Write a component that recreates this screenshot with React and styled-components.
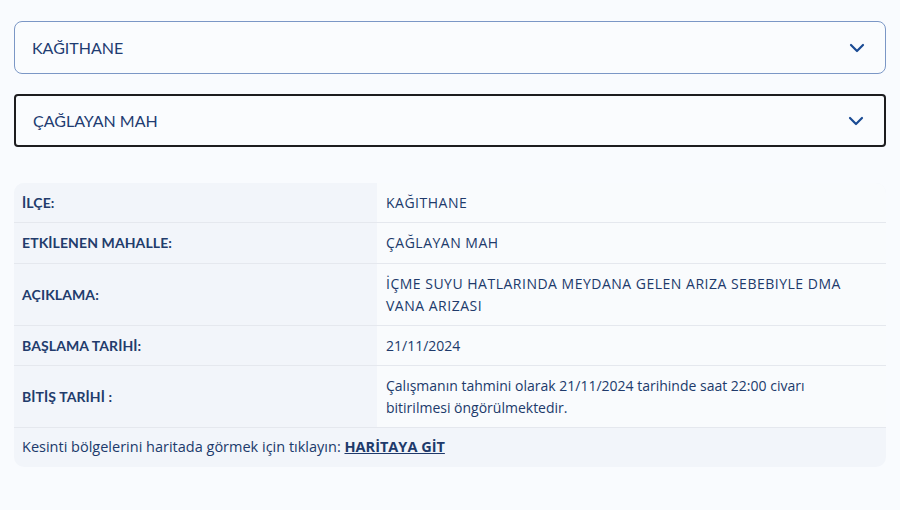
import styled, { createGlobalStyle } from 'styled-components';

const GlobalStyle = createGlobalStyle`
    body {
        margin: 0;
        background: #f9fbfe;
        font-family: "Lato", "Noto Sans", sans-serif;
        color: #203a6b;
    }
`;

const Page = styled.div`
    padding: 21px 14px;
    display: flex;
    flex-direction: column;
`;

const Select = styled.div`
    height: 53px;
    box-sizing: border-box;
    display: flex;
    align-items: center;
    justify-content: space-between;
    padding: 0 20px 0 17px;
    border: ${p => p.$active ? '2px solid #1d1d1f' : '1.5px solid #7b97c6'};
    border-radius: ${p => p.$active ? '4px' : '8px'};
    background: #fafcfe;
    font-size: 16px;
    color: #1f3c72;
    margin-bottom: ${p => p.$active ? '36px' : '20px'};
`;

const Chevron = () => (
    <svg width="16" height="10" viewBox="0 0 16 10" fill="none" stroke="#1a4b94" strokeWidth="2.2" strokeLinecap="round" strokeLinejoin="round">
        <path d="M2 2l6 6 6-6" />
    </svg>
);

const Table = styled.div`
    display: grid;
    grid-template-columns: 363px 1fr;
    border-radius: 10px;
    overflow: hidden;
    background: #f2f5fa;
    font-family: "Open Sans", "Noto Sans", sans-serif;
    font-size: 14px;
    line-height: 22px;
`;

const Cell = styled.div`
    padding: 9px 8px 8.25px;
    border-bottom: 1px solid #e5e8ee;
    display: flex;
    align-items: center;
    background: ${p => p.$value ? '#f9fbfd' : '#f2f5fa'};
    padding-left: ${p => p.$value ? '9px' : '8px'};
`;

const Label = styled.span`
    font-family: "Lato", sans-serif;
    font-size: 14px;
    font-weight: 700;
    letter-spacing: 0.1px;
    color: #223c6c;
`;

const Value = styled.span`
    max-width: 470px;
    letter-spacing: ${p => p.$caps ? '0.5px' : '0'};
`;

const Footer = styled.div`
    grid-column: 1 / -1;
    padding: 8px 8px 9px;
    font-size: 14.5px;
`;

const MapLink = styled.a`
    font-weight: 700;
    color: #203a6b;
    text-decoration: underline;
`;

const rows = [
    ['İLÇE:', 'KAĞITHANE'],
    ['ETKİLENEN MAHALLE:', 'ÇAĞLAYAN MAH'],
    ['AÇIKLAMA:', 'İÇME SUYU HATLARINDA MEYDANA GELEN ARIZA SEBEBIYLE DMA VANA ARIZASI'],
    ['BAŞLAMA TARİHİ:', '21/11/2024'],
    ['BİTİŞ TARİHİ :', 'Çalışmanın tahmini olarak 21/11/2024 tarihinde saat 22:00 civarı bitirilmesi öngörülmektedir.'],
];

const isCaps = text => /[A-ZÇĞİÖŞÜ]/.test(text) && text === text.toUpperCase();

const App = () => {
    return (
        <Page>
            <GlobalStyle />
            <Select>KAĞITHANE<Chevron /></Select>
            <Select $active>ÇAĞLAYAN MAH<Chevron /></Select>
            <Table>
                {rows.map(([label, value]) => [
                    <Cell key={label}><Label>{label}</Label></Cell>,
                    <Cell $value key={label + 'v'}>
                        <Value $caps={isCaps(value)}>{value}</Value>
                    </Cell>,
                ])}
                <Footer>
                    Kesinti bölgelerini haritada görmek için tıklayın: <MapLink href="#">HARİTAYA GİT</MapLink>
                </Footer>
            </Table>
        </Page>
    );
};

export default App;
